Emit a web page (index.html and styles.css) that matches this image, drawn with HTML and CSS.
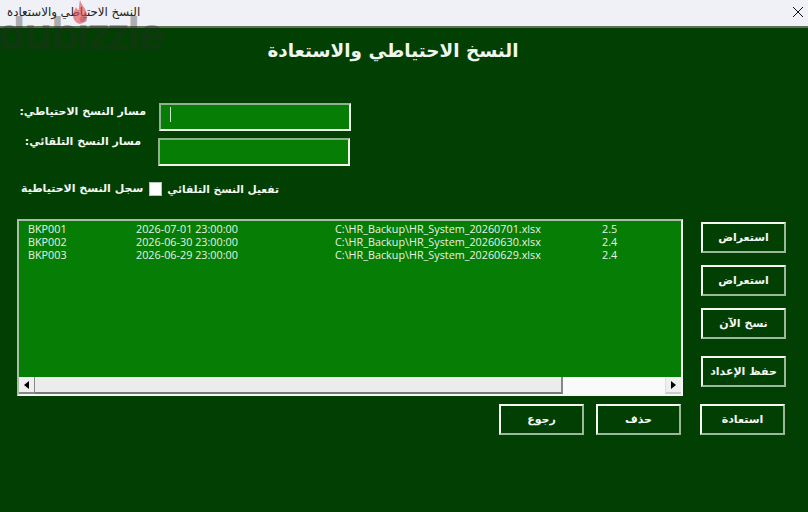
FILE: index.html
```html
<!DOCTYPE html>
<html lang="ar">
<head>
<meta charset="utf-8">
<title>النسخ الاحتياطي والاستعادة</title>
<link rel="stylesheet" href="styles.css">
</head>
<body>
<div class="window">
  <header class="titlebar">
    <span class="titlebar-text" dir="rtl">النسخ الاحتياطي والاستعادة</span>
    <svg class="close" viewBox="0 0 10 10" width="10" height="10"><path d="M0 0L10 10M10 0L0 10" stroke="#111" stroke-width="1" fill="none"/></svg>
  </header>
  <main class="form">
    <h1 class="heading" dir="rtl">النسخ الاحتياطي والاستعادة</h1>
    <div class="path-row path-row-one">
      <label class="path-label path-label-one" dir="rtl">مسار النسخ الاحتياطي:</label>
      <div class="field"><span class="caret"></span></div>
    </div>
    <div class="path-row path-row-two">
      <label class="path-label path-label-two" dir="rtl">مسار النسخ التلقائي:</label>
      <div class="field"></div>
    </div>
    <div class="options">
      <span class="option-text option-log" dir="rtl">سجل النسخ الاحتياطية</span>
      <span class="checkbox"></span>
      <span class="option-text option-auto" dir="rtl">تفعيل النسخ التلقائي</span>
    </div>
    <div class="workspace">
      <div class="listbox">
        <div class="rows">
          <div class="row"><span class="c-id">BKP001</span><span class="c-date">2026-07-01 23:00:00</span><span class="c-path">C:\HR_Backup\HR_System_20260701.xlsx</span><span>2.5</span></div>
          <div class="row"><span class="c-id">BKP002</span><span class="c-date">2026-06-30 23:00:00</span><span class="c-path">C:\HR_Backup\HR_System_20260630.xlsx</span><span>2.4</span></div>
          <div class="row"><span class="c-id">BKP003</span><span class="c-date">2026-06-29 23:00:00</span><span class="c-path">C:\HR_Backup\HR_System_20260629.xlsx</span><span>2.4</span></div>
        </div>
        <div class="scrollbar">
          <div class="arrow"><svg viewBox="0 0 5 8" width="5" height="8"><path d="M5 0V8L0 4Z" fill="#000"/></svg></div>
          <div class="thumb"></div>
          <div class="track"></div>
          <div class="arrow arrow-right"><svg viewBox="0 0 5 8" width="5" height="8"><path d="M0 0V8L5 4Z" fill="#000"/></svg></div>
        </div>
      </div>
      <div class="side-buttons">
        <button class="btn" dir="rtl">استعراض</button>
        <button class="btn" dir="rtl">استعراض</button>
        <button class="btn" dir="rtl">نسخ الآن</button>
        <button class="btn btn-save" dir="rtl">حفظ الإعداد</button>
      </div>
    </div>
    <div class="bottom-buttons">
      <button class="btn" dir="rtl">رجوع</button>
      <button class="btn" dir="rtl">حذف</button>
      <button class="btn btn-restore" dir="rtl">استعادة</button>
    </div>
  </main>
  <div class="watermark">
    <span class="wm-text">dubizzle</span>
    <svg class="wm-flame" viewBox="0 0 16 24" width="16" height="24"><path d="M8 0C9 5 15 9 15 15C15 20 12 23 8 24C4 23 1 20 1 15C1 12 3 10 4 7C5 9 5.500 10 6.500 10C7.500 7 7 3 8 0Z" fill="#e0454f" fill-opacity=".6"/></svg>
  </div>
</div>
</body>
</html>
```
FILE: styles.css
```css
* { box-sizing: border-box; }
html, body { margin: 0; padding: 0; }
body { width: 808px; height: 512px; overflow: hidden; font-family: "DejaVu Sans", sans-serif; }
.window { display: flex; flex-direction: column; height: 512px; position: relative; overflow: hidden; }
.titlebar { height: 28px; flex: none; background: #f0f1f6; border-bottom: 2px solid #5f6f5f; display: flex; align-items: center; justify-content: space-between; padding: 0 5px 2px 7px; }
.titlebar-text { font-size: 11.800px; color: #222; }
.form { flex: 1; background: #023f02; padding: 0 0 0 17px; }
.heading { margin: 0; width: 752px; height: 46px; text-align: center; font-size: 18.400px; line-height: 46px; font-weight: bold; color: #eef6ee; }
.path-row { display: flex; }
.path-row-one { margin-top: 29px; height: 28px; }
.path-row-two { margin-top: 7px; height: 28px; }
.path-label { color: #f2f7f2; font-size: 11px; font-weight: bold; text-align: right; white-space: nowrap; }
.path-label-one { width: 125px; margin: 0 13px 0 4px; line-height: 18px; }
.path-label-two { width: 116px; margin: 0 17px 0 8px; line-height: 7px; }
.field { background: #067d05; border: 2px solid; border-color: #8db08d #f0f5ec #f0f5ec #8db08d; width: 192px; height: 28px; padding: 2px 9px; }
.caret { display: block; width: 1px; height: 15px; background: #cfe6cf; }
.options { display: flex; align-items: center; margin: 16px 0 0 4px; height: 14px; }
.option-text { color: #f2f7f2; font-weight: bold; white-space: nowrap; }
.option-log { font-size: 11px; margin-right: 6px; padding-bottom: 2px; }
.option-auto { font-size: 10.600px; margin-left: 5px; }
.checkbox { width: 13px; height: 14px; flex: none; background: #fff; border: 1px solid #b8c6b8; }
.workspace { display: flex; margin-top: 23px; align-items: flex-start; }
.listbox { width: 666px; height: 177px; background: #067d05; border: 2px solid; border-color: #a7bfa7 #f4f7f2 #f4f7f2 #a7bfa7; display: flex; flex-direction: column; }
.rows { flex: 1; padding: 1px 0 0 9px; }
.row { display: flex; height: 13px; font-family: "Open Sans", sans-serif; font-size: 10.800px; line-height: 13px; color: #e7f3e5; }
.c-id { width: 108px; }
.c-date { width: 199px; }
.c-path { width: 267px; }
.scrollbar { height: 17px; flex: none; display: flex; background: #fafafa; }
.arrow { width: 16px; flex: none; display: flex; align-items: center; justify-content: center; background: #efefef; border-right: 1px solid #888; border-bottom: 2px solid #888; }
.arrow-right { border-right: 0; border-left: 1px solid #ddd; border-bottom-color: #ccc; }
.thumb { width: 528px; background: #ececec; border-right: 2px solid #888; border-bottom: 2px solid #777; }
.track { flex: 1; background: #fafafa; }
.side-buttons { display: flex; flex-direction: column; margin: 3px 0 0 18px; gap: 12px; }
.btn { display: block; width: 85px; height: 31px; padding: 0; background: #023f02; color: #f2f7f2; font-family: "DejaVu Sans", sans-serif; font-size: 11px; font-weight: bold; border: 2px solid; border-color: #f4f8f2 #9db79d #9db79d #f4f8f2; }
.btn-save { margin-top: 5px; }
.bottom-buttons { display: flex; margin: 8px 0 0 482px; gap: 12px; }
.btn-restore { margin-left: 7px; }
.watermark { position: absolute; left: 0; top: 0; width: 170px; height: 60px; pointer-events: none; }
.wm-text { position: absolute; left: -2px; top: 11px; font-family: "Open Sans", sans-serif; font-weight: 700; font-size: 44px; line-height: 44px; letter-spacing: -2px; color: rgba(40, 45, 40, .35); white-space: nowrap; }
.wm-flame { position: absolute; left: 72px; top: 0; }
```
